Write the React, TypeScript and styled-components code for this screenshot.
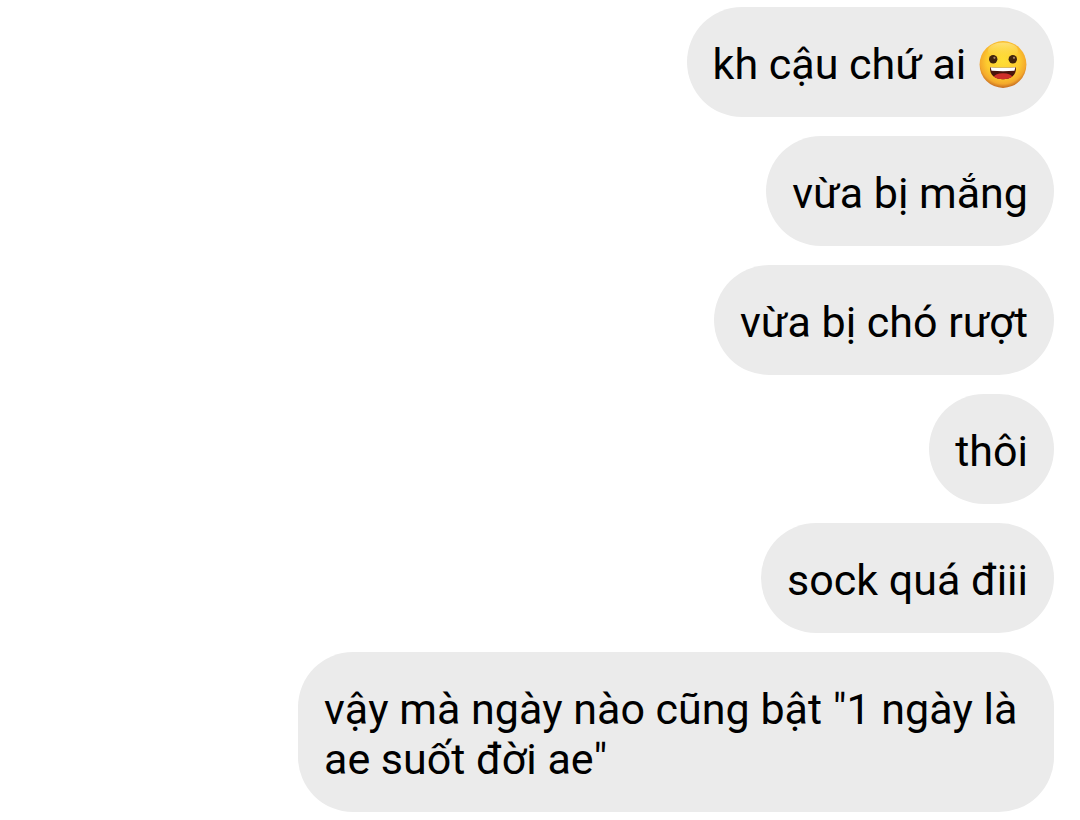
import React from "react";
import styled, { createGlobalStyle } from "styled-components";

const GlobalStyle = createGlobalStyle`
  body {
    margin: 0;
    background: #ffffff;
    font-family: Roboto, "Noto Sans", sans-serif;
  }
`;

const Thread = styled.ul`
  list-style: none;
  margin: 0;
  padding: 7px 26px;
  display: flex;
  flex-direction: column;
  align-items: flex-end;
  gap: 19px;
`;

const Bubble = styled.li`
  box-sizing: border-box;
  max-width: 70vw;
  padding: 32px 26px 28px;
  border-radius: 55px;
  background: #ebebeb;
  color: #000000;
  font-size: 43px;
  font-kerning: none;
  line-height: 50px;
`;

const Emoji = styled.svg`
  width: 48px;
  height: 48px;
  margin: 0 1px 0 2px;
  vertical-align: -9px;
`;

const Grin = () => (
  <Emoji viewBox="0 0 48 48" role="img" aria-label="grinning face">
    <defs>
      <radialGradient id="face" cx="50%" cy="42%" r="58%">
        <stop offset="0" stopColor="#ffdf35" />
        <stop offset="0.6" stopColor="#fdcb2f" />
        <stop offset="0.85" stopColor="#f4a92c" />
        <stop offset="1" stopColor="#c46a20" />
      </radialGradient>
      <linearGradient id="shine" x1="0" y1="0" x2="0" y2="1">
        <stop offset="0" stopColor="#fff3a8" stopOpacity="0.6" />
        <stop offset="1" stopColor="#ffe04a" stopOpacity="0" />
      </linearGradient>
      <clipPath id="mouth">
        <path d="M11 27.2Q24 28.200 37 27.200C37.500 35 32 39.200 24 39.200S10.500 35 11 27.200z" />
      </clipPath>
    </defs>
    <circle cx="24" cy="24.500" r="23.400" fill="url(#face)" />
    <ellipse cx="24" cy="10.500" rx="15" ry="8" fill="url(#shine)" />
    <circle cx="14.200" cy="19.200" r="4.200" fill="#41230d" />
    <circle cx="33.800" cy="19.200" r="4.200" fill="#41230d" />
    <circle cx="15.400" cy="17.800" r="1.100" fill="#a98662" />
    <circle cx="35" cy="17.800" r="1.100" fill="#a98662" />
    <g clipPath="url(#mouth)">
      <rect x="9" y="26" width="30" height="16" fill="#4a140c" />
      <ellipse cx="24" cy="38" rx="9.500" ry="4.800" fill="#cf2f29" />
      <path d="M11.500 27h25l-1 3.800q-11.500 0.800-23 0z" fill="#ffffff" />
    </g>
  </Emoji>
);

export default function App() {
  return (
    <Thread>
      <GlobalStyle />
      <Bubble>kh cậu chứ ai <Grin /></Bubble>
      <Bubble>vừa bị mắng</Bubble>
      <Bubble>vừa bị chó rượt</Bubble>
      <Bubble>thôi</Bubble>
      <Bubble>sock quá điii</Bubble>
      <Bubble>vậy mà ngày nào cũng bật "1 ngày là ae suốt đời ae"</Bubble>
    </Thread>
  );
}
